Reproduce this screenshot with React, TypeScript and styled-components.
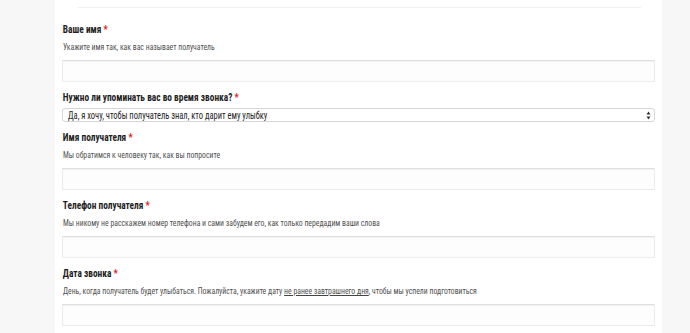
import { createGlobalStyle } from 'styled-components';
import styled from 'styled-components';

const GlobalStyle = createGlobalStyle`
    html, body {
        margin: 0;
        padding: 0;
        background: #f7f7f7;
        height: 333px;
        overflow: hidden;
    }
    body {
        font-family: 'Roboto Condensed', Roboto, 'Liberation Sans', sans-serif;
    }
`;

const Page = styled.div`
    display: flex;
    height: 333px;
    padding-left: 55px;
`;

const Panel = styled.div`
    width: 607px;
    background: #ffffff;
    display: flex;
    flex-direction: column;
`;

const Divider = styled.div`
    height: 1px;
    background: #efefef;
    margin: 7px 21px 0 23px;
`;

const Form = styled.form`
    display: flex;
    flex-direction: column;
    padding: 15px 7px 0 7px;
`;

const Field = styled.div<{ $first?: boolean }>`
    display: flex;
    flex-direction: column;
    align-items: flex-start;
    margin-top: ${(p) => (p.$first ? '0' : '9px')};
`;

// no condensed face installed, so narrow the regular one
const Label = styled.label`
    font-size: 11px;
    line-height: 14px;
    font-weight: 700;
    color: #1e1e1e;
    padding-left: 1px;
    white-space: nowrap;
    transform: scaleX(0.85);
    transform-origin: left center;
`;

const Star = styled.span`
    color: #e81414;
`;

const Help = styled.div`
    font-size: 8.3px;
    line-height: 12px;
    color: #505050;
    margin-top: 4px;
    padding-left: 1px;
    white-space: nowrap;
    transform: scaleX(0.93);
    transform-origin: left center;

    u {
        text-decoration: underline;
        text-decoration-color: #444444;
    }
`;

const TextInput = styled.input`
    box-sizing: border-box;
    width: 593px;
    height: 22px;
    margin: 7px 0 0;
    border: 1px solid #ececec;
    border-top-color: #dedede;
    box-shadow: inset 0 1px 1px rgba(0, 0, 0, 0.04);
    background: #fdfdfd;
    outline: none;
`;

const SelectBox = styled.div`
    box-sizing: border-box;
    width: 593px;
    height: 14px;
    margin-top: 3px;
    border: 1px solid #d6d6d6;
    border-radius: 3px;
    display: flex;
    align-items: center;
    justify-content: space-between;
    padding: 0 3px 0 5px;
    background: #ffffff;
`;

const SelectValue = styled.span`
    font-size: 10px;
    color: #262626;
    white-space: nowrap;
    transform: scaleX(0.845);
    transform-origin: left center;
`;

const fields = [
    {
        label: 'Ваше имя',
        help: <>Укажите имя так, как вас называет получатель</>
    },
    {
        label: 'Нужно ли упоминать вас во время звонка?',
        select: 'Да, я хочу, чтобы получатель знал, кто дарит ему улыбку'
    },
    {
        label: 'Имя получателя',
        help: <>Мы обратимся к человеку так, как вы попросите</>
    },
    {
        label: 'Телефон получателя',
        help: <>Мы никому не расскажем номер телефона и сами забудем его, как только передадим ваши слова</>
    },
    {
        label: 'Дата звонка',
        help: (
            <>
                День, когда получатель будет улыбаться. Пожалуйста, укажите дату <u>не ранее завтрашнего дня</u>, чтобы
                мы успели подготовиться
            </>
        )
    }
];

const Arrows = () => (
    <svg width='5' height='9' viewBox='0 0 5 9'>
        <path d='M2.5 0.5 L4.5 3.5 L0.5 3.5 Z' fill='#333' />
        <path d='M2.5 8.5 L4.5 5.5 L0.5 5.5 Z' fill='#333' />
    </svg>
);

const App = () => {
    return (
        <>
            <GlobalStyle />
            <Page>
                <Panel>
                    <Divider />
                    <Form>
                        {fields.map((f, i) => (
                            <Field key={f.label} $first={i === 0}>
                                <Label>
                                    {f.label} <Star>*</Star>
                                </Label>
                                {f.select ? (
                                    <SelectBox>
                                        <SelectValue>{f.select}</SelectValue>
                                        <Arrows />
                                    </SelectBox>
                                ) : (
                                    <>
                                        <Help>{f.help}</Help>
                                        <TextInput type='text' />
                                    </>
                                )}
                            </Field>
                        ))}
                    </Form>
                </Panel>
            </Page>
        </>
    );
};

export default App;
